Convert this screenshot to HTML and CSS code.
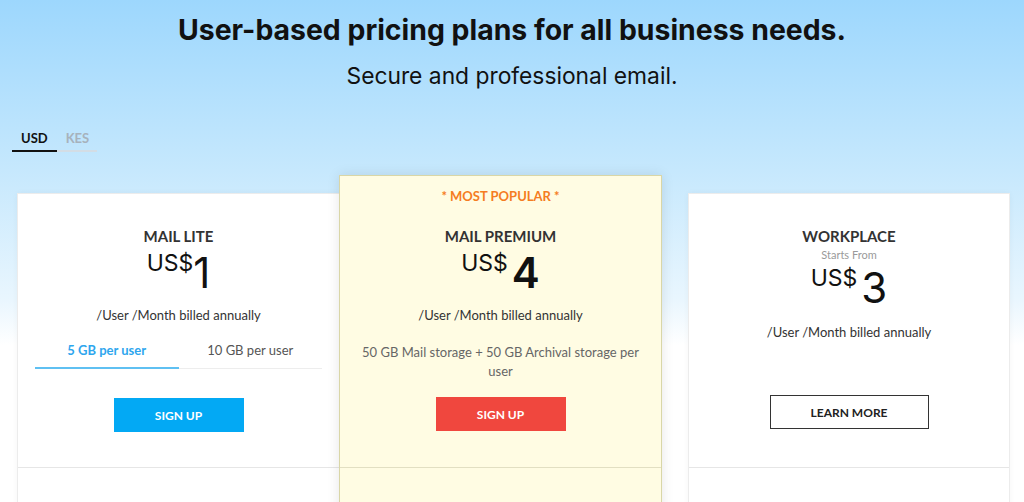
FILE: index.html
```html
<!DOCTYPE html>
<html lang="en">
<head>
<meta charset="utf-8">
<title>Pricing</title>
<link rel="stylesheet" href="styles.css">
</head>
<body>
<div class="page">
  <header class="hero">
    <h1 class="title">User-based pricing plans for all business needs.</h1>
    <p class="subtitle">Secure and professional email.</p>
  </header>

  <div class="currency">
    <span class="cur cur-active">USD</span>
    <span class="cur">KES</span>
  </div>

  <div class="plans">
    <div class="card card-lite">
      <div class="card-top">
        <div class="plan-name">MAIL LITE</div>
        <div class="price"><span class="cur-sym">US$</span><span class="amount amount-thin">1</span></div>
        <div class="billed">/User /Month billed annually</div>
        <div class="storage-tabs">
          <span class="stab stab-active">5 GB per user</span>
          <span class="stab">10 GB per user</span>
        </div>
        <button class="btn btn-blue">SIGN UP</button>
      </div>
      <div class="card-bottom"></div>
    </div>

    <div class="card card-popular">
      <div class="card-top card-top-popular">
        <div class="badge">* MOST POPULAR *</div>
        <div class="plan-name plan-name-popular">MAIL PREMIUM</div>
        <div class="price"><span class="cur-sym">US$</span><span class="amount amount-bold amount-gap">4</span></div>
        <div class="billed">/User /Month billed annually</div>
        <p class="storage-note">50 GB Mail storage + 50 GB Archival storage per user</p>
        <button class="btn btn-red btn-red-pos">SIGN UP</button>
      </div>
      <div class="card-bottom card-bottom-popular"></div>
    </div>

    <div class="card card-workplace">
      <div class="card-top">
        <div class="plan-name">WORKPLACE</div>
        <div class="starts">Starts From</div>
        <div class="price price-work"><span class="cur-sym">US$</span><span class="amount amount-gap">3</span></div>
        <div class="billed billed-work">/User /Month billed annually</div>
        <button class="btn btn-outline">LEARN MORE</button>
      </div>
      <div class="card-bottom"></div>
    </div>
  </div>
</div>
</body>
</html>
```

FILE: styles.css
```css
* { box-sizing: border-box; }
html, body { margin: 0; padding: 0; }
body {
  font-family: Lato, "Open Sans", sans-serif;
  color: #222;
  background: linear-gradient(180deg, #9dd7fd 0px, #c6e8fd 170px, #e9f6fe 300px, #ffffff 345px, #ffffff 100%);
  min-height: 502px;
  overflow: hidden;
}
.page { width: 1024px; height: 502px; overflow: hidden; }

.hero { text-align: center; padding-top: 12px; font-family: Inter, Lato, sans-serif; }
.title {
  margin: 0;
  font-size: 28.4px;
  line-height: 36px;
  font-weight: 700;
  color: #111;
}
.subtitle {
  margin: 14px 0 0;
  font-size: 22.8px;
  line-height: 28px;
  font-weight: 400;
  color: #111;
}

.currency {
  margin: 40px 0 0 12px;
  width: 85px;
  display: flex;
  border-bottom: 2px solid #d3dde5;
}
.cur {
  font-size: 13px;
  line-height: 16px;
  font-weight: 700;
  color: #a7b2bc;
  padding: 0 9px 4px;
  margin-bottom: -2px;
  border-bottom: 2px solid transparent;
}
.cur-active { color: #111; border-bottom-color: #111; }

.plans {
  display: flex;
  align-items: flex-start;
  padding-left: 17px;
  margin-top: 23px;
}
.card {
  background: #fff;
  border: 1px solid #ececec;
  box-shadow: 0 0 6px rgba(0, 0, 0, 0.04);
  text-align: center;
}
.card-lite { width: 323px; margin-top: 18px; }
.card-popular {
  width: 323px;
  margin-left: -1px;
  position: relative;
  z-index: 2;
  background: #fffce3;
  border-color: #d9d6a7;
  box-shadow: 0 0 12px rgba(0, 0, 0, 0.10);
}
.card-workplace { width: 322px; margin-left: 26px; margin-top: 18px; }

.card-top {
  height: 274px;
  padding-top: 33px;
  display: flex;
  flex-direction: column;
  align-items: center;
  border-bottom: 1px solid #e6e6e6;
}
.card-top-popular {
  height: 292px;
  padding-top: 12px;
  border-bottom-color: #e2dfc2;
}
.card-bottom { height: 60px; }

.badge {
  font-size: 13px;
  line-height: 16px;
  font-weight: 700;
  color: #f57c22;
}
.plan-name {
  font-size: 15px;
  line-height: 18px;
  font-weight: 700;
  color: #333;
}
.plan-name-popular { margin-top: 23px; }

.starts {
  margin-top: 3px;
  font-size: 11px;
  line-height: 13px;
  color: #9a9a9a;
}

.price {
  margin-top: 7px;
  display: flex;
  align-items: flex-start;
  color: #111;
  font-family: Inter, Lato, sans-serif;
}
.price-work { margin-top: 6px; }
.cur-sym {
  font-size: 23px;
  line-height: 23px;
  font-weight: 400;
}
.amount {
  font-size: 42px;
  line-height: 42px;
  font-weight: 400;
}
.amount-thin { font-weight: 400; }
.amount-bold { font-weight: 600; }
.amount-gap { margin-left: 4px; }

.billed {
  margin-top: 12px;
  font-size: 13px;
  line-height: 18px;
  color: #333;
}
.billed-work { margin-top: 14px; }

.storage-tabs {
  margin: 17px 0 0 17px;
  width: 287px;
  align-self: flex-start;
  display: flex;
  border-bottom: 1px solid #ededed;
}
.stab {
  flex: 1;
  font-size: 13px;
  line-height: 18px;
  color: #555;
  padding-bottom: 8px;
  margin-bottom: -1px;
  border-bottom: 2px solid transparent;
}
.stab-active {
  color: #2ea6ee;
  font-weight: 700;
  border-bottom-color: #5fc0f2;
}

.storage-note {
  margin: 19px 0 0;
  padding: 0 17px;
  font-size: 13px;
  line-height: 19px;
  color: #666;
}

.btn {
  font-family: Lato, "Open Sans", sans-serif;
  font-size: 12px;
  font-weight: 700;
  height: 34px;
  border: none;
  padding: 0;
  cursor: pointer;
}
.btn-blue {
  margin-top: 29px;
  width: 130px;
  background: #03a9f4;
  color: #fff;
}
.btn-red {
  width: 130px;
  background: #f0473e;
  color: #fff;
}
.btn-red-pos { margin-top: 16px; }
.btn-outline {
  margin-top: 54px;
  width: 159px;
  background: #fff;
  color: #222;
  border: 1.5px solid #333;
}
```
